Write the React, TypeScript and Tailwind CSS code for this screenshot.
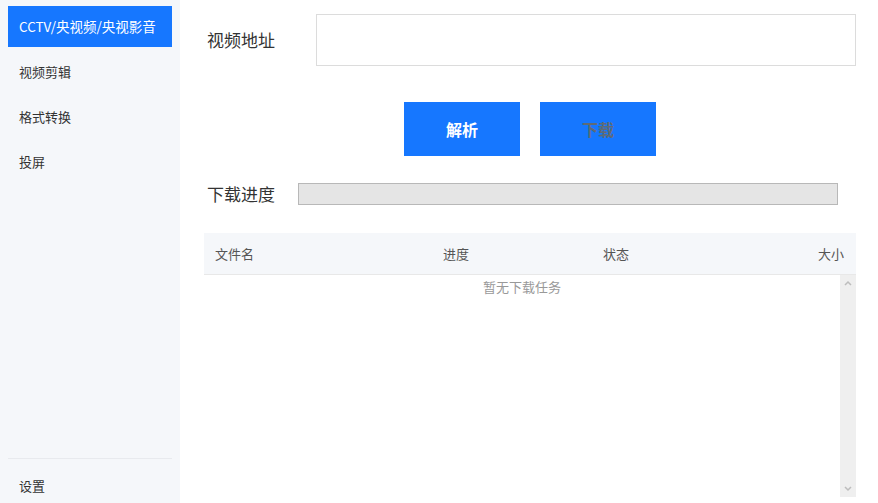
import React from 'react';

const font = { fontFamily: '"Noto Sans CJK SC", "Noto Sans", sans-serif' };

const navItems = ['CCTV/央视频/央视影音', '视频剪辑', '格式转换', '投屏'];

const App: React.FC = () => {
  return (
    <div className="flex h-[503px] w-[878px] overflow-hidden bg-white text-[#333]" style={font}>
      {/* 侧边栏 */}
      <aside className="flex w-[180px] shrink-0 flex-col bg-[#f5f7fa] px-2 pt-[6px]">
        <nav className="flex flex-col gap-1">
          {navItems.map((item, i) => (
            <div
              key={item}
              className={
                i === 0
                  ? 'flex h-[41px] items-center bg-[#1677ff] px-[11px] text-[13.5px] text-white'
                  : 'flex h-[41px] items-center px-[11px] text-[13px] text-[#333]'
              }
            >
              {item}
            </div>
          ))}
        </nav>
        <div className="mt-auto border-t border-[#e8eaee]" />
        <div className="h-[44px] px-[11px] pt-[17px] text-[13px] leading-5">设置</div>
      </aside>

      {/* 主区域 */}
      <main className="flex flex-1 flex-col pl-6 pr-[22px] pt-[14px] pb-[6px]">
        <div className="flex h-[52px] items-center">
          <label className="w-[112px] shrink-0 pl-[3px] text-[17px] text-[#333]">视频地址</label>
          <input className="h-full flex-1 border border-[#dcdcdc] px-3 text-[14px] outline-none" />
        </div>

        <div className="mt-[36px] flex justify-center gap-5">
          <button className="h-[54px] w-[116px] bg-[#1677ff] text-[16px] font-bold text-white">解析</button>
          <button className="h-[54px] w-[116px] bg-[#1677ff] text-[16px] font-bold text-[#5f6b75]">下载</button>
        </div>

        <div className="mt-[27px] flex h-[22px] items-center pr-[18px]">
          <span className="w-[94px] shrink-0 pl-[3px] text-[17px] text-[#333]">下载进度</span>
          <div className="h-full flex-1 border border-[#b8b8b8] bg-[#e5e5e5]" />
        </div>

        <div className="mt-[28px] flex flex-1 flex-col">
          <div className="grid h-[42px] grid-cols-[228px_160px_1fr_auto] items-center border-b border-[#e8e8e8] bg-[#f5f7fa] px-[11px] text-[13px] text-[#555]">
            <span>文件名</span>
            <span>进度</span>
            <span>状态</span>
            <span className="pr-px">大小</span>
          </div>
          <div className="flex flex-1">
            <div className="flex-1 pt-[2px] text-center text-[13px] leading-5 text-[#999]">暂无下载任务</div>
            <div className="flex w-4 flex-col items-center justify-between bg-[#efefef] py-[5px]">
              <svg width="8" height="6" viewBox="0 0 8 6" fill="none">
                <path d="M1 5L4 2l3 3" stroke="#bdbdbd" strokeWidth="1.5" />
              </svg>
              <svg width="8" height="6" viewBox="0 0 8 6" fill="none">
                <path d="M1 1l3 3 3-3" stroke="#bdbdbd" strokeWidth="1.5" />
              </svg>
            </div>
          </div>
        </div>
      </main>
    </div>
  );
};

export default App;
